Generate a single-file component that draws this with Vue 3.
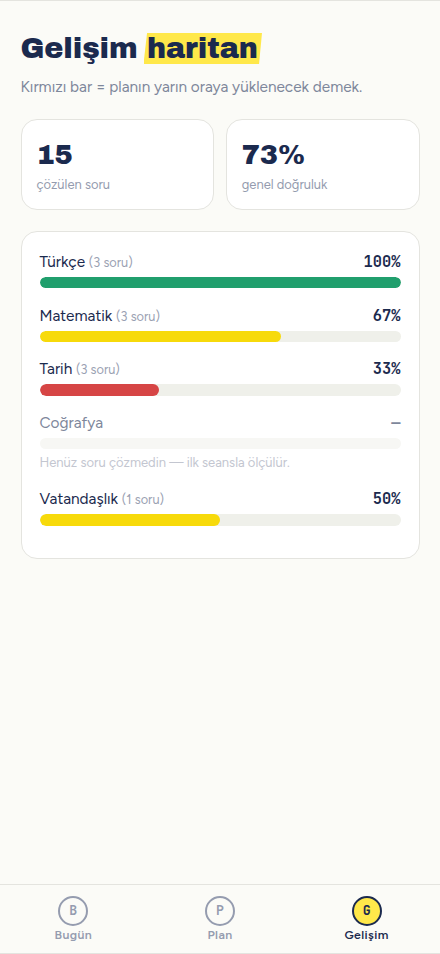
<script setup>
const stats = [
  { value: '15', label: 'çözülen soru', key: 'count' },
  { value: '73%', label: 'genel doğruluk', key: 'rate' },
]
const subjects = [
  { name: 'Türkçe', count: 3, percent: 100, tone: 'green' },
  { name: 'Matematik', count: 3, percent: 67, tone: 'yellow' },
  { name: 'Tarih', count: 3, percent: 33, tone: 'red' },
  { name: 'Coğrafya', count: 0, percent: 0, tone: 'none' },
  { name: 'Vatandaşlık', count: 1, percent: 50, tone: 'yellow' },
]
const tabs = [
  { letter: 'B', label: 'Bugün' },
  { letter: 'P', label: 'Plan' },
  { letter: 'G', label: 'Gelişim', active: true },
]
</script>

<template>
  <div class="screen">
    <main>
      <h1><span class="word">Gelişim</span><span class="mark">haritan</span></h1>
      <p class="lead">Kırmızı bar = planın yarın oraya yüklenecek demek.</p>
      <section class="stats">
        <div v-for="s in stats" :key="s.key" class="stat" :class="s.key">
          <strong>{{ s.value }}</strong>
          <span>{{ s.label }}</span>
        </div>
      </section>
      <section class="subjects">
        <div v-for="s in subjects" :key="s.name" class="subject" :class="{ empty: !s.count }">
          <div class="head">
            <span class="name">{{ s.name }} <small v-if="s.count">({{ s.count }} soru)</small></span>
            <b v-if="s.count">{{ s.percent }}%</b>
            <b v-else>—</b>
          </div>
          <div class="track">
            <div class="fill" :class="s.tone" :style="{ width: s.percent + '%' }"></div>
          </div>
          <p v-if="!s.count" class="note">Henüz soru çözmedin — ilk seansla ölçülür.</p>
        </div>
      </section>
    </main>
    <nav>
      <a v-for="t in tabs" :key="t.label" :class="{ active: t.active }">
        <i>{{ t.letter }}</i>
        <span>{{ t.label }}</span>
      </a>
    </nav>
  </div>
</template>

<style>
body {
  background: #fbfbf7;
}
</style>

<style scoped>
.screen {
  box-sizing: border-box;
  height: 954px;
  display: flex;
  flex-direction: column;
  border-top: 1px solid #e4e4df;
  border-bottom: 1px solid #e4e4df;
  background: #fbfbf7;
  color: #1b2a4e;
  font-family: Figtree, "Open Sans", "Noto Sans", sans-serif;
}
main {
  flex: 1;
  padding: 32px 20.5px 0;
}
h1 {
  display: flex;
  margin: 0;
  height: 31px;
  line-height: 31px;
  font-family: "Archivo Black", Inter, sans-serif;
  font-size: 28.7px;
  font-weight: 400;
  letter-spacing: -0.12px;
  white-space: nowrap;
}
.word {
  width: 123px;
}
.mark {
  box-sizing: border-box;
  width: 118.5px;
  padding-left: 3.5px;
  background: #ffe84a;
  clip-path: polygon(3% 0, 100% 0, 97.5% 100%, 0 100%);
}
.lead {
  margin: 11px 0 0;
  height: 24px;
  line-height: 24px;
  font-size: 15.35px;
  color: #7e879b;
  white-space: nowrap;
}
.stats {
  display: grid;
  grid-template-columns: 1fr 1fr;
  gap: 11.5px;
  margin-top: 20px;
}
.stat {
  box-sizing: border-box;
  height: 91px;
  padding: 20px 15px 0;
  border: 1px solid #e4e4df;
  border-radius: 16px;
  background: #fff;
}
.stat strong {
  display: block;
  height: 30px;
  line-height: 30px;
  font-family: "Archivo Black", Inter, sans-serif;
  font-size: 27.3px;
  font-weight: 400;
  letter-spacing: -0.1px;
}
.stat span {
  display: block;
  margin-top: 5px;
  line-height: 19px;
  font-size: 12.95px;
  color: #949bae;
}
.subjects {
  box-sizing: border-box;
  height: 328px;
  margin-top: 21px;
  padding: 17px 18px 0;
  border: 1px solid #e4e4df;
  border-radius: 16px;
  background: #fff;
}
.subject {
  margin-bottom: 14.3px;
}
.head {
  display: flex;
  justify-content: space-between;
  height: 24px;
  line-height: 25px;
  margin-bottom: 4px;
}
.name {
  font-size: 15.38px;
}
.name small {
  font-size: 12.75px;
  color: #9aa1b2;
}
.head b {
  font-family: "JetBrains Mono", "DejaVu Sans Mono", monospace;
  font-size: 15.38px;
}
.track {
  height: 11.4px;
  overflow: hidden;
  border-radius: 6px;
  background: #eff0ea;
}
.fill {
  height: 100%;
  border-radius: 6px;
}
.green {
  background: #209f6d;
}
.yellow {
  background: #f7da0b;
}
.red {
  background: #d64545;
}
.empty .head {
  color: #7e879b;
}
.empty .track {
  background: #f7f7f4;
}
.note {
  margin: 3.5px 0 0;
  height: 19px;
  line-height: 19px;
  font-size: 13px;
  color: #c3c6d0;
  white-space: nowrap;
}
nav {
  box-sizing: border-box;
  height: 69px;
  padding-top: 11px;
  display: grid;
  grid-template-columns: repeat(3, 1fr);
  border-top: 1px solid #e4e4df;
}
nav a {
  display: flex;
  flex-direction: column;
  align-items: center;
  color: #959caf;
}
nav i {
  box-sizing: border-box;
  width: 30px;
  height: 30px;
  border: 2px solid currentColor;
  border-radius: 50%;
  line-height: 26px;
  text-align: center;
  font-family: "JetBrains Mono", "DejaVu Sans Mono", monospace;
  font-size: 13.2px;
  font-style: normal;
  font-weight: 700;
}
nav span {
  line-height: 18px;
  font-size: 12.3px;
  font-weight: 600;
  letter-spacing: 0.4px;
}
nav .active {
  color: #1b2a4e;
}
.active i {
  background: #ffe84a;
}
</style>
